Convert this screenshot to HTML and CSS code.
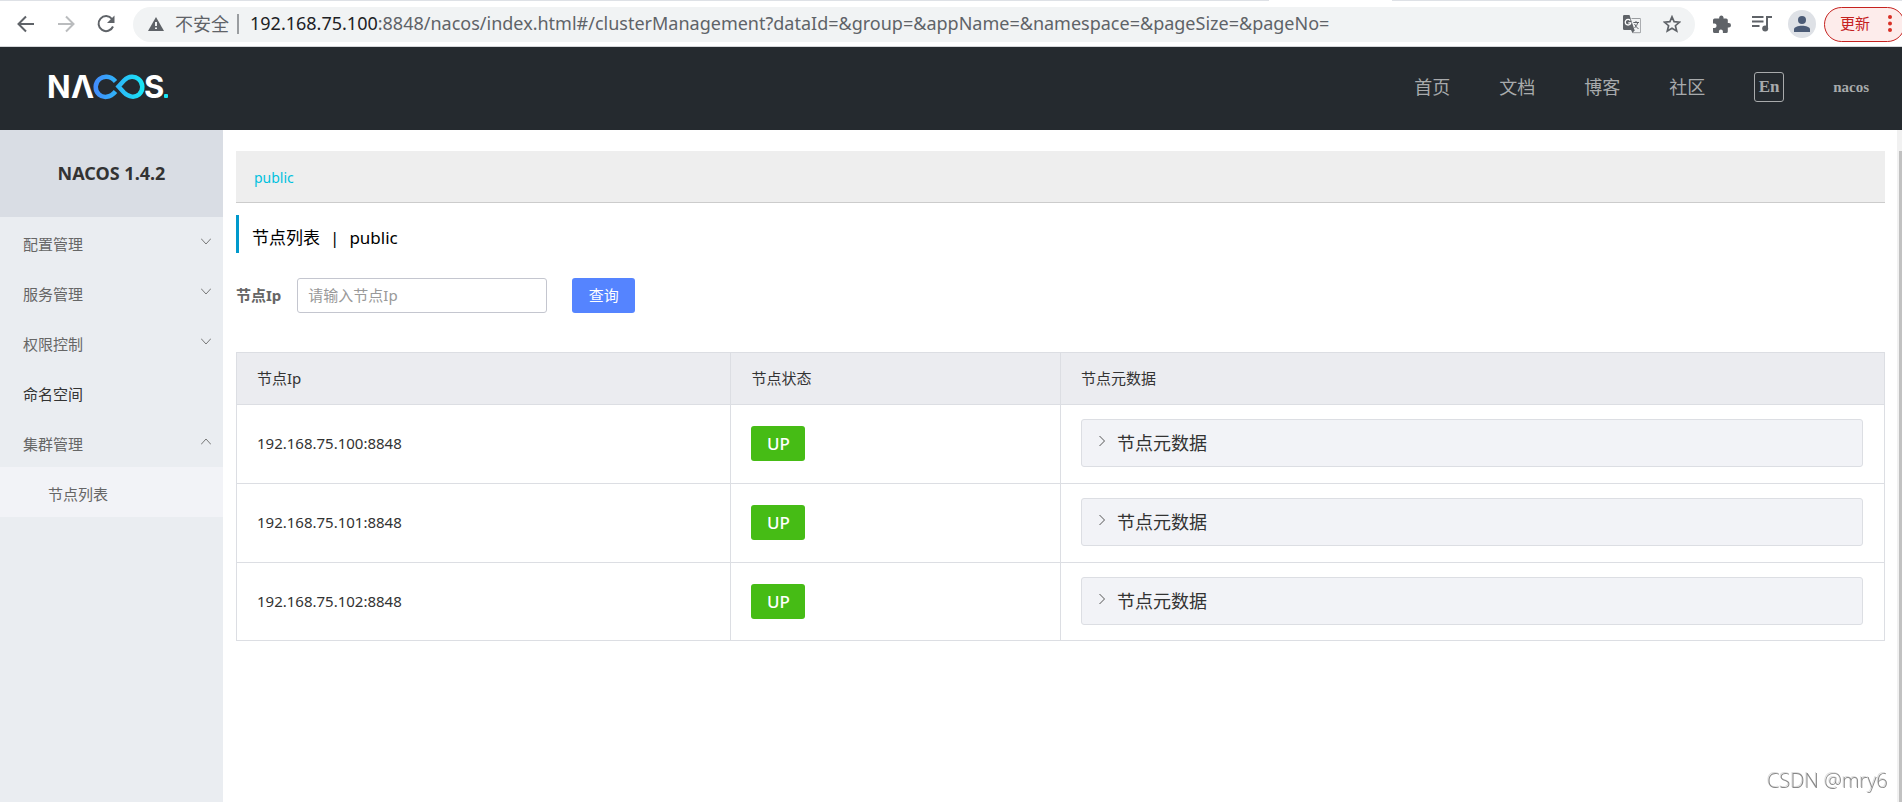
FILE: index.html
```html
<!DOCTYPE html>
<html lang="zh-CN">
<head>
<meta charset="utf-8">
<title>Nacos</title>
<link rel="stylesheet" href="styles.css">
</head>
<body>
<div class="browser">
  <div class="tab-edge"></div>
  <div class="toolbar">
    <button class="tool" aria-label="后退"><svg width="20" height="20" viewBox="0 0 20 20" fill="none" stroke="#5f6368" stroke-width="2"><path d="M18 10H3M10 2.500L2.500 10L10 17.500"/></svg></button>
    <button class="tool" aria-label="前进"><svg width="20" height="20" viewBox="0 0 20 20" fill="none" stroke="#babcbe" stroke-width="2"><path d="M2 10H17M10 2.500L17.500 10L10 17.500"/></svg></button>
    <button class="tool" aria-label="刷新"><svg width="20" height="20" viewBox="0 0 20 20"><path d="M16 5A7.500 7.500 0 1 0 17 12.500" fill="none" stroke="#5f6368" stroke-width="2"/><path d="M18.500 1.500V9H11z" fill="#5f6368"/></svg></button>
    <div class="address">
      <svg width="16" height="14" viewBox="0 0 16 14"><path d="M8 0L16 14H0z" fill="#5f6368"/><path d="M8 5V9M8 10.500V12" stroke="#f1f3f4" stroke-width="2"/></svg>
      <span class="insecure">不安全</span>
      <span class="url"><b>192.168.75.100</b>:8848/nacos/index.html#/clusterManagement?dataId=&amp;group=&amp;appName=&amp;namespace=&amp;pageSize=&amp;pageNo=</span>
      <button class="plain" aria-label="翻译"><svg width="18" height="19" viewBox="0 0 18 19"><path d="M8.500 3.500H17a.7.7 0 0 1 .7.700V17a.7.7 0 0 1-.7.700H9.500" fill="none" stroke="#9a9da0"/><path d="M1.200 0H6.500L11.500 15H1.200A1.200 1.200 0 0 1 0 13.800V1.200A1.200 1.200 0 0 1 1.200 0z" fill="#5f6368"/><path d="M8 15H12L9.500 18z" fill="#5f6368"/><path d="M7.300 5.500A2.800 2.800 0 1 0 7.800 7.800H5.300" fill="none" stroke="#fff" stroke-width="1.300"/><path d="M10.300 7.500H16M13 6V7.500M14.800 7.500Q14 11 11.500 13M11.500 9Q13 12 15.500 14" fill="none" stroke="#5f6368"/></svg></button>
      <button class="plain" aria-label="收藏"><svg width="18" height="18" viewBox="0 0 18 18"><path d="M9 1.800L11.100 6.700L16.500 7.200L12.400 10.700L13.700 16L9 13.200L4.300 16L5.600 10.700L1.500 7.200L6.900 6.700z" fill="none" stroke="#5f6368" stroke-width="1.700"/></svg></button>
    </div>
    <button class="plain" aria-label="扩展程序"><svg width="18" height="18" viewBox="0 0 18 18"><path d="M6.200 2.300a2.200 2.200 0 0 1 4.300 0V3.500H13.200A1.600 1.600 0 0 1 14.800 5V8h1a2.200 2.200 0 0 1 0 4.400h-1v4a1.600 1.600 0 0 1-1.600 1.600H9.900V16.400a2 2 0 0 0-4 0V18H1.600A1.600 1.600 0 0 1 0 16.400V13H1.400a2.200 2.200 0 0 0 0-4.400H0V5a1.600 1.600 0 0 1 1.600-1.500H6.200z" fill="#5f6368"/></svg></button>
    <button class="plain media" aria-label="媒体"><svg width="20" height="16" viewBox="0 0 20 16"><path d="M0 1H11.500M0 5.500H11.500M0 10H7.500M15 12V1H20" fill="none" stroke="#5f6368" stroke-width="2"/><circle cx="13.200" cy="12.500" r="3" fill="#5f6368"/></svg></button>
    <button class="avatar" aria-label="账户"><svg width="16" height="16" viewBox="0 0 16 16" fill="#4b5b76"><circle cx="8" cy="4" r="4"/><path d="M0 16V13.500C0 11 4 9.800 8 9.800S16 11 16 13.500V16z"/></svg></button>
    <button class="update">更新<svg width="4" height="17" viewBox="0 0 4 17" fill="#d93025"><circle cx="2" cy="2" r="2"/><circle cx="2" cy="8.500" r="2"/><circle cx="2" cy="15" r="2"/></svg></button>
  </div>
</div>
<header class="header">
  <a class="logo" href="#" aria-label="NACOS">
    <svg width="130" height="50" viewBox="-4 -12 130 50">
      <defs><linearGradient id="wave" gradientUnits="userSpaceOnUse" x1="45" y1="0" x2="96" y2="0"><stop offset="0" stop-color="#4489fc"/><stop offset="1" stop-color="#17e6f5"/></linearGradient></defs>
      <text class="mark" x="-1" y="24">N</text><text class="mark" x="23" y="24">Λ</text>
      <path d="M67.500 7.500C62 1.200 55 2.200 51.500 5C46.500 9 46.500 16.500 51 20.500C55 24 62 24.200 67.500 17.500" fill="none" stroke="url(#wave)" stroke-width="4.500"/>
      <path d="M70.500 12.500L76 6.500C81 1.500 87 2 90.500 5C95.500 9 95.500 16.500 91 20.500C87 23.800 81 23.500 76 18.500z" fill="none" stroke="url(#wave)" stroke-width="4.500"/>
      <text class="mark" x="96" y="24">S</text><rect x="116" y="20" width="4" height="4" rx="1" fill="#17e6f5"/>
    </svg>
  </a>
  <nav class="nav">
    <a href="#">首页</a><a href="#">文档</a><a href="#">博客</a><a href="#">社区</a>
    <button class="lang">En</button>
    <a class="user" href="#">nacos</a>
  </nav>
</header>
<div class="body">
  <aside class="side">
    <h1 class="version">NACOS 1.4.2</h1>
    <ul class="menu">
      <li><a href="#">配置管理<svg class="chev" width="10" height="7" viewBox="0 0 10 7"><path d="M0 .5L5 6L10 .5"/></svg></a></li>
      <li><a href="#">服务管理<svg class="chev" width="10" height="7" viewBox="0 0 10 7"><path d="M0 .5L5 6L10 .5"/></svg></a></li>
      <li><a href="#">权限控制<svg class="chev" width="10" height="7" viewBox="0 0 10 7"><path d="M0 .5L5 6L10 .5"/></svg></a></li>
      <li><a class="leaf" href="#">命名空间</a></li>
      <li><a href="#">集群管理<svg class="chev" width="10" height="7" viewBox="0 0 10 7"><path d="M0 6.500L5 1L10 6.500"/></svg></a></li>
      <li><a class="sub" href="#">节点列表</a></li>
    </ul>
  </aside>
  <main class="main">
    <div class="spaces"><a href="#">public</a></div>
    <h2 class="title"><span>节点列表</span><span>|</span><span>public</span></h2>
    <form class="search">
      <label for="ip">节点Ip</label>
      <input id="ip" type="text" placeholder="请输入节点Ip">
      <button type="button">查询</button>
    </form>
    <table class="nodes">
      <colgroup><col class="c-ip"><col class="c-state"><col></colgroup>
      <thead><tr><th>节点Ip</th><th>节点状态</th><th>节点元数据</th></tr></thead>
      <tbody>
        <tr><td>192.168.75.100:8848</td><td><span class="tag">UP</span></td><td><button class="meta"><svg class="chev" width="6" height="10" viewBox="0 0 6 10"><path d="M.5 0L5.500 5L.5 10"/></svg>节点元数据</button></td></tr>
        <tr><td>192.168.75.101:8848</td><td><span class="tag">UP</span></td><td><button class="meta"><svg class="chev" width="6" height="10" viewBox="0 0 6 10"><path d="M.5 0L5.500 5L.5 10"/></svg>节点元数据</button></td></tr>
        <tr><td>192.168.75.102:8848</td><td><span class="tag">UP</span></td><td><button class="meta"><svg class="chev" width="6" height="10" viewBox="0 0 6 10"><path d="M.5 0L5.500 5L.5 10"/></svg>节点元数据</button></td></tr>
      </tbody>
    </table>
  </main>
  <div class="scroll"><div class="thumb"></div></div>
</div>
<div class="watermark">CSDN @mry6</div>
</body>
</html>
```
FILE: styles.css
```css
* { box-sizing: border-box; }
body {
  margin: 0; height: 100vh; display: flex; flex-direction: column; overflow: hidden;
  background: #fff; color: #333; font: 15px/20px "Noto Sans", "Noto Sans CJK SC", sans-serif;
}
a { color: inherit; text-decoration: none; }
button { font: inherit; padding: 0; border: 0; background: none; color: inherit; cursor: pointer; }
svg { display: block; flex: none; }

.tab-edge { height: 1px; background: linear-gradient(90deg, #dee1e6 66.700%, #fff 66.700%, #fff 73.200%, #dee1e6 73.200%); }
.toolbar { display: flex; align-items: center; height: 46px; padding: 1px 0 0 16px; border-bottom: 1px solid #d5d7da; overflow: hidden; }
.tool { margin-right: 20px; flex: none; }
.address {
  flex: 1; min-width: 0; height: 35px; margin: 0 18px 0 -3px; padding: 0 14px 0 15px; border-radius: 18px;
  display: flex; align-items: center; background: #f1f3f4; color: #5f6368; font-size: 18px;
}
.insecure { margin-left: 11px; padding-right: 8px; border-right: 2px solid #9a9da0; white-space: nowrap; }
.url { flex: 1; margin-left: 11px; white-space: nowrap; overflow: hidden; line-height: 26px; padding-bottom: 2px; }
.url b { color: #202124; font-weight: 400; }
.address .plain { margin-left: 22px; }
.media { margin: 0 16px 0 21px; }
.avatar { width: 28px; height: 28px; flex: none; border-radius: 50%; background: #dee1e6; display: flex; align-items: center; justify-content: center; }
.update {
  flex: none; width: 81px; height: 35px; margin: 0 -3px 0 8px; padding: 0 12px 2px 15px; border: 1px solid #c5221f; border-radius: 18px;
  display: flex; align-items: center; justify-content: space-between; background: #fdeceb; color: #c5221f;
}

.header { height: 83px; flex: none; padding: 0 33px 4px 44px; display: flex; align-items: center; justify-content: space-between; background: #252a2f; }
.mark { font: 700 31px Inter, sans-serif; fill: #fff; }
.nav { display: flex; align-items: center; gap: 49px; color: #a8aaac; font-size: 18px; }
.lang { width: 30px; height: 30px; border: 1px solid #a8aaac; border-radius: 3px; font: 700 17px/26px "Liberation Serif", serif; }
.user { font: 700 15px/20px "Liberation Serif", serif; }

.body { flex: 1; min-height: 0; display: flex; }
.side { width: 223px; flex: none; background: #eaedf1; }
.version { margin: 0; height: 87px; background: #d9dde4; font-size: 18px; line-height: 86px; text-align: center; }
.menu { list-style: none; margin: 0; padding: 0; }
.menu a { display: flex; align-items: center; justify-content: space-between; height: 50px; padding: 3px 12px 0 23px; color: #666; }
.menu .chev { margin-bottom: 5px; }
.menu .leaf { color: #333; }
.menu .sub { padding-left: 48px; background: #f2f3f7; }
.chev { fill: none; stroke: #777; }

.main { flex: 1; min-width: 0; padding: 21px 12px 0 13px; }
.spaces { height: 52px; padding: 4px 18px 0; border-bottom: 1px solid #ccc; background: #eee; font-size: 14px; line-height: 46px; color: #00c1de; }
.title { margin: 12px 0 25px; height: 38px; padding: 4px 0 0 13px; border-left: 3px solid #09c; display: flex; gap: 10px; color: #000; font-weight: 400; font-size: 17px; line-height: 38px; }
.search { display: flex; align-items: center; margin-bottom: 39px; }
.search label { margin-right: 16px; padding-bottom: 2px; color: #666; font-weight: 700; }
.search input { width: 250px; height: 35px; margin-right: 25px; padding: 0 10px 2px; border: 1px solid #c4c6cf; border-radius: 3px; font: inherit; }
.search input::placeholder { color: #999; }
.search button { width: 63px; height: 35px; padding-bottom: 2px; border-radius: 3px; background: #5584ff; color: #fff; }
.nodes { width: 100%; border-collapse: collapse; table-layout: fixed; }
.c-ip { width: 30%; }
.c-state { width: 20%; }
.nodes th, .nodes td { border: 1px solid #dcdee3; padding: 14px 21px 16px 20px; text-align: left; font-weight: 400; }
.nodes th { height: 52px; background: #ebecf0; }
.nodes td { height: 79px; }
.nodes tr:last-child td { height: 78px; padding-bottom: 15px; }
.tag { display: inline-block; width: 54px; height: 35px; border-radius: 3px; background: #46bc15; color: #fff; font-weight: 500; font-size: 17px; line-height: 36px; text-align: center; vertical-align: middle; }
.meta { width: 100%; height: 48px; padding: 0 17px; display: flex; align-items: center; gap: 12px; border: 1px solid #dcdee3; border-radius: 3px; background: #f2f3f7; font-size: 18px; line-height: 24px; }
.meta .chev { margin-bottom: 5px; stroke: #555; }
.scroll { width: 5px; flex: none; padding: 21px 0 0 2px; background: #f1f1f1; }
.thumb { height: 100%; background: #c1c1c1; }
.watermark { position: fixed; right: 14px; bottom: 8px; color: #888; font-family: "Open Sans", sans-serif; font-weight: 300; font-size: 20px; line-height: 26px; text-shadow: -1px -1px 0 #ddd; }
```
